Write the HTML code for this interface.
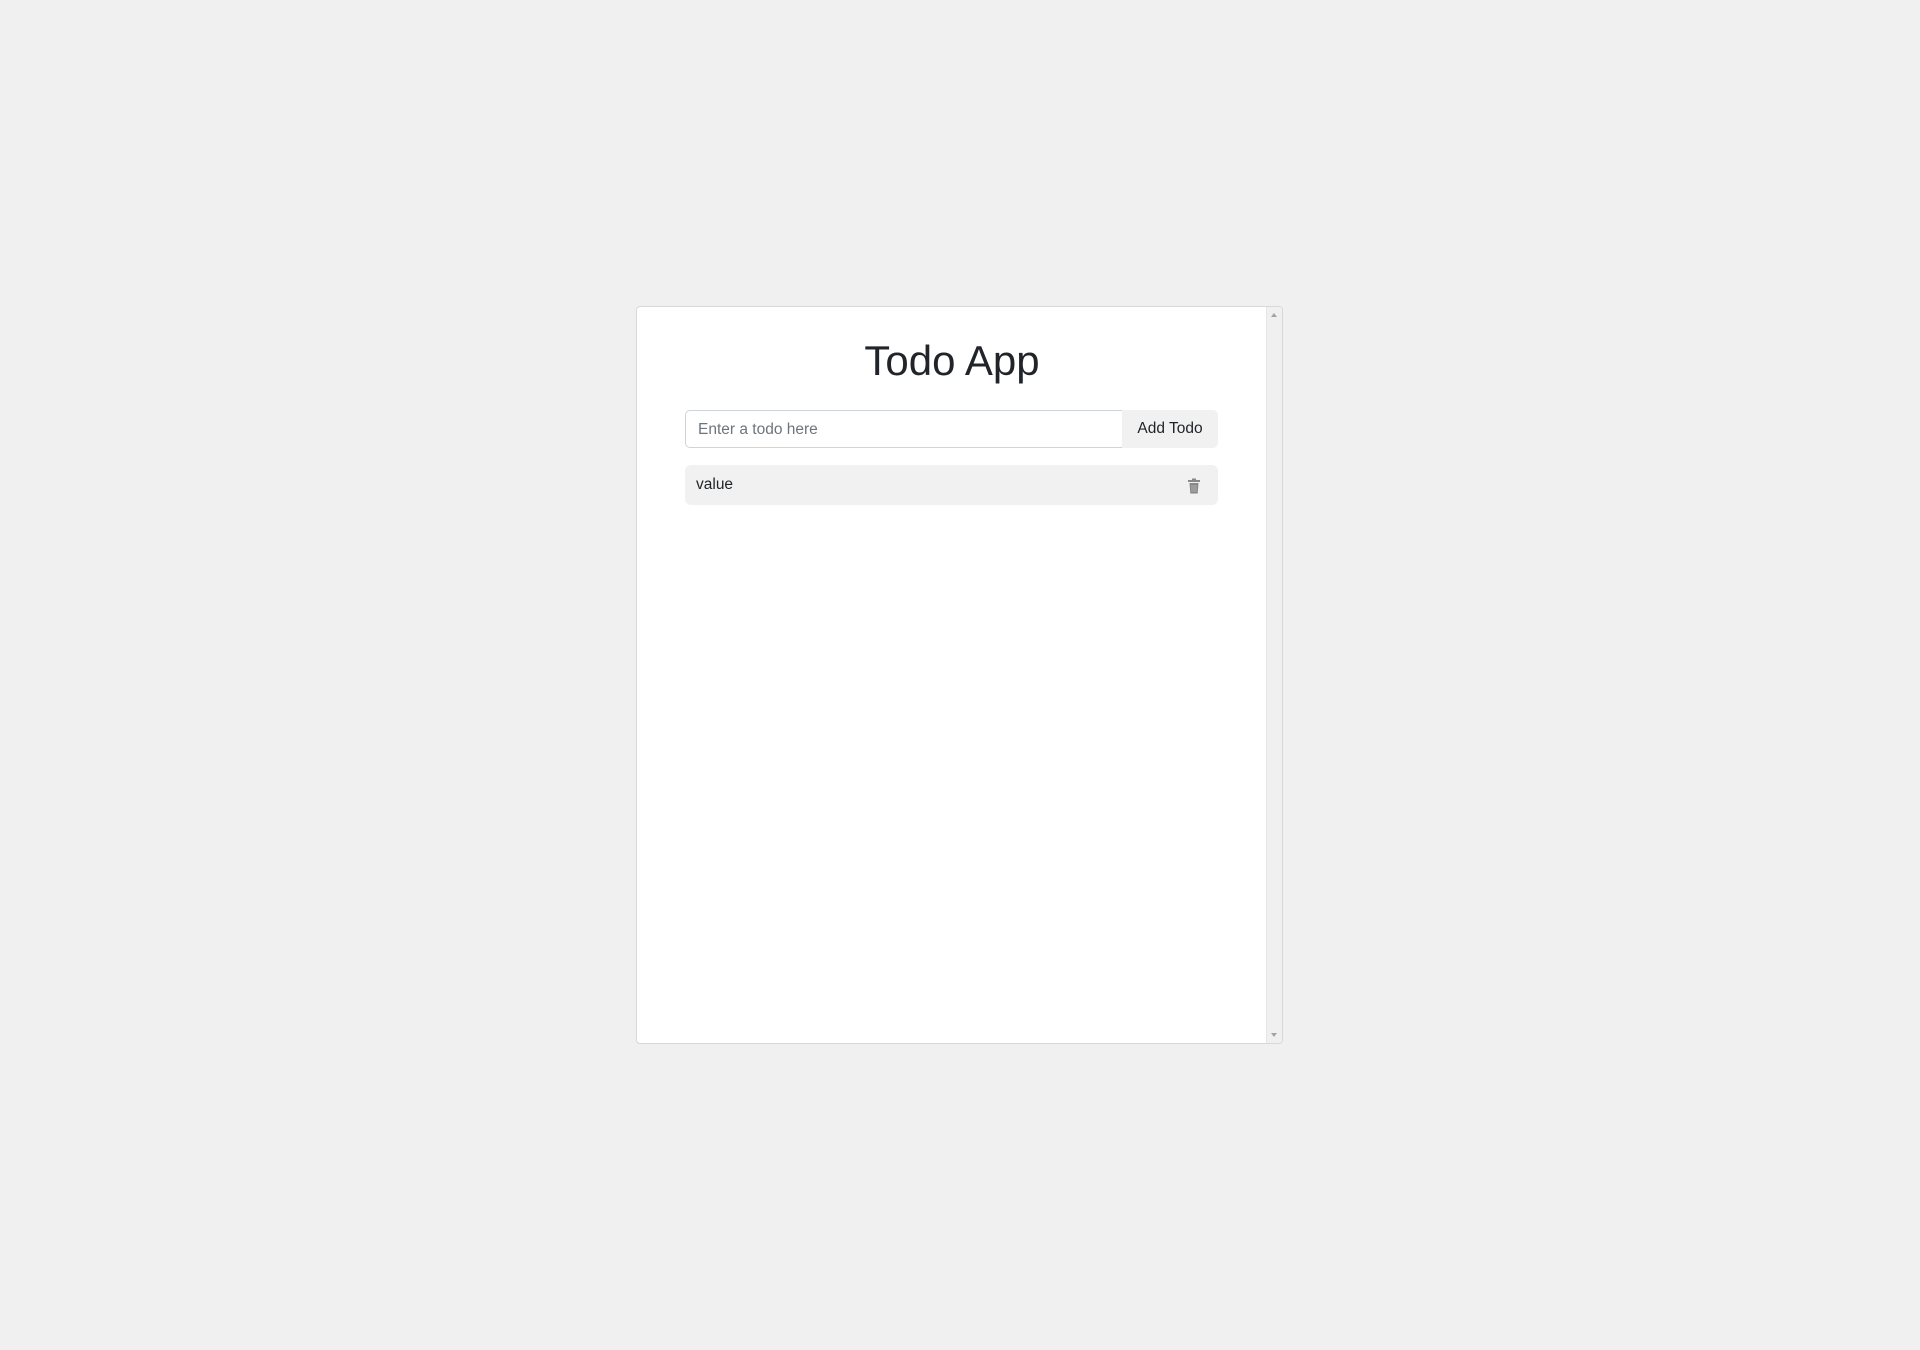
<!DOCTYPE html>
<html><head><style>
html,body{margin:0;padding:0;background:#f0f0f0;width:1920px;height:1350px;overflow:hidden;font-family:"Liberation Sans",sans-serif;}
.card{position:absolute;left:636px;top:306px;width:647px;height:738px;background:#fff;border:1px solid #d8d8d8;border-radius:4px;box-sizing:border-box;overflow:hidden}
.sb{position:absolute;right:0;top:0;width:16px;height:100%;background:#f0f0f0;border-left:1px solid #e6e6e6;box-sizing:border-box}
.up{position:absolute;left:4px;top:6px;width:0;height:0;border-left:3.5px solid transparent;border-right:3.5px solid transparent;border-bottom:4px solid #a3a3a3}
.dn{position:absolute;left:4px;bottom:6px;width:0;height:0;border-left:3.5px solid transparent;border-right:3.5px solid transparent;border-top:4px solid #a3a3a3}
h1{position:absolute;left:0;width:630px;top:29px;margin:0;text-align:center;font-weight:normal;font-size:42px;color:#212529;line-height:50px}
.inp{position:absolute;left:48px;top:103px;width:438px;height:38px;border:1px solid #ced4da;border-radius:5px 0 0 5px;box-sizing:border-box;font-size:15.5px;color:#6c757d;padding-left:12px;line-height:37px}
.btn{position:absolute;left:485px;top:103px;width:96px;height:38px;background:#f1f1f1;border-radius:0 5px 5px 0;font-size:15.5px;color:#212529;text-align:center;line-height:37px}
.item{position:absolute;left:48px;top:158px;width:533px;height:40px;background:#f1f1f1;border-radius:6px;font-size:15.5px;color:#212529;line-height:40px;padding-left:11px;box-sizing:border-box}
.item svg{position:absolute;left:502px;top:13px}
</style></head><body>
<div class="card">
<h1>Todo App</h1>
<div class="inp">Enter a todo here</div>
<div class="btn">Add Todo</div>
<div class="item">value
<svg width="14" height="16" viewBox="0 0 14 16"><rect x="1" y="2" width="12" height="2" fill="#888"/><rect x="5" y="0.5" width="4" height="2" fill="#888"/><path d="M2.5 5h9l-0.8 10.5h-7.4z" fill="#888"/><path d="M5 7v7M7 7v7M9 7v7" stroke="#bbb" stroke-width="0.8"/></svg>
</div>
<div class="sb"><div class="up"></div><div class="dn"></div></div>
</div>
</body></html>
